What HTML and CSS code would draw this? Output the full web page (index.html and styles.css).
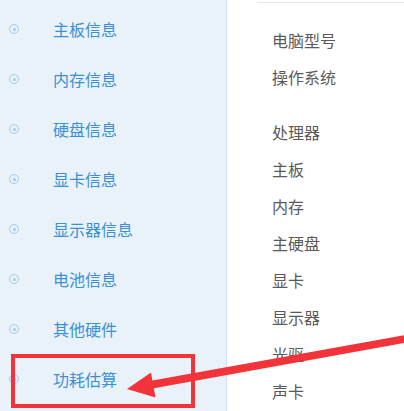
FILE: index.html
```html
<!DOCTYPE html>
<html lang="zh">
<head>
<meta charset="utf-8">
<link rel="stylesheet" href="styles.css">
</head>
<body>
<div class="page">
  <nav class="sidebar">
    <div class="item"><span class="dot"></span><span class="label">主板信息</span></div>
    <div class="item"><span class="dot"></span><span class="label">内存信息</span></div>
    <div class="item"><span class="dot"></span><span class="label">硬盘信息</span></div>
    <div class="item"><span class="dot"></span><span class="label">显卡信息</span></div>
    <div class="item"><span class="dot"></span><span class="label">显示器信息</span></div>
    <div class="item"><span class="dot"></span><span class="label">电池信息</span></div>
    <div class="item"><span class="dot"></span><span class="label">其他硬件</span></div>
    <div class="item"><span class="dot"></span><span class="label">功耗估算</span></div>
  </nav>
  <main class="main">
    <div class="topline"></div>
    <div class="group">
      <div class="row">电脑型号</div>
      <div class="row">操作系统</div>
    </div>
    <div class="group">
      <div class="row">处理器</div>
      <div class="row">主板</div>
      <div class="row">内存</div>
      <div class="row">主硬盘</div>
      <div class="row">显卡</div>
      <div class="row">显示器</div>
      <div class="row">光驱</div>
      <div class="row">声卡</div>
    </div>
  </main>
  <div class="highlight"></div>
  <svg class="arrow" width="404" height="411" viewBox="0 0 404 411">
    <polygon fill="#f2333a" points="127,389 151,372.5 152.4,380.6 409,334.4 410,342 153.8,388.3 155.5,397.5"/>
  </svg>
</div>
</body>
</html>
```
FILE: styles.css
```css
* { box-sizing: border-box; }
html, body { margin: 0; padding: 0; }
body {
  width: 404px;
  height: 411px;
  overflow: hidden;
  background: #ffffff;
  font-family: "Noto Sans CJK SC", "Noto Sans", sans-serif;
}
.page {
  position: relative;
  display: flex;
  width: 404px;
  height: 411px;
}
.sidebar {
  width: 227px;
  flex: none;
  background: #e9f2f9;
  border-right: 1px solid #cfe3f3;
  padding-top: 4px;
  display: flex;
  flex-direction: column;
}
.item {
  height: 50px;
  display: flex;
  align-items: center;
  padding-left: 9px;
}
.dot {
  width: 10px;
  height: 10px;
  border: 1.5px solid #9fcbee;
  border-radius: 50%;
  display: flex;
  align-items: center;
  justify-content: center;
  flex: none;
}
.dot::after {
  content: "";
  width: 3px;
  height: 3px;
  border-radius: 50%;
  background: #9fcbee;
}
.label {
  margin-left: 34px;
  font-size: 16px;
  color: #3a90d8;
  line-height: 20px;
}
.main {
  flex: 1;
  display: flex;
  flex-direction: column;
  padding-top: 2px;
}
.topline {
  margin-left: 30px;
  border-top: 1px solid #e6e6e6;
  height: 0;
}
.group {
  padding-left: 45px;
  display: flex;
  flex-direction: column;
}
.topline + .group { margin-top: 19px; }
.group + .group { margin-top: 18px; }
.row {
  height: 37px;
  line-height: 37px;
  font-size: 16px;
  color: #5a5a5a;
}
.highlight {
  position: absolute;
  left: 11px;
  top: 354px;
  width: 184px;
  height: 54px;
  border: 4px solid #f2333a;
}
.arrow {
  position: absolute;
  left: 0;
  top: 0;
}
```
